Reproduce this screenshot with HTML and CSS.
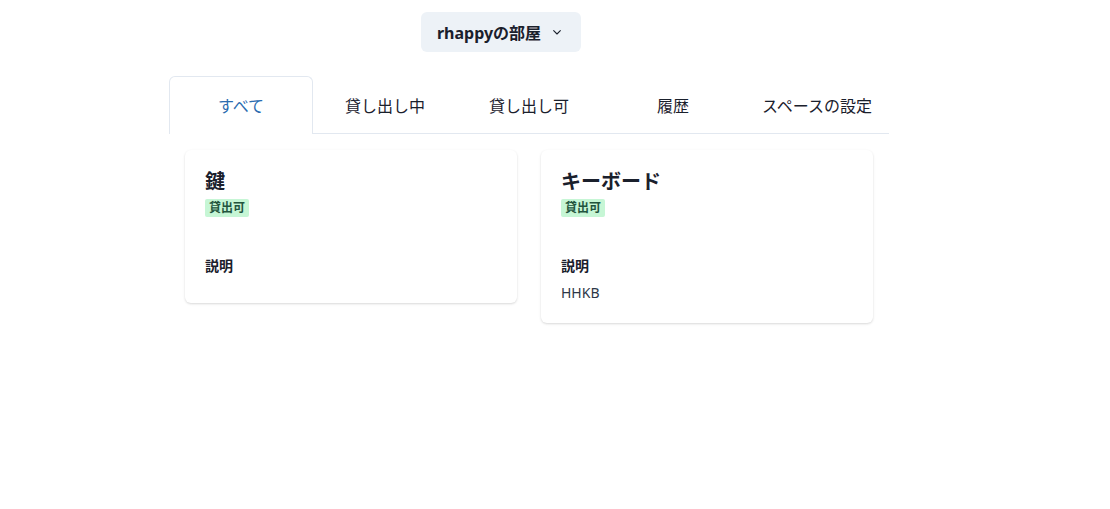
FILE: index.html
```html
<!DOCTYPE html>
<html lang="ja">
<head>
<meta charset="utf-8">
<title>rhappyの部屋</title>
<link rel="stylesheet" href="styles.css">
</head>
<body>
<div class="page">
  <div class="header">
    <button class="menu-btn" type="button">
      <span>rhappyの部屋</span>
      <svg class="chev" viewBox="0 0 24 24" width="16" height="16"><path d="M7 10l5 5 5-5" fill="none" stroke="currentColor" stroke-width="1.6" stroke-linecap="round" stroke-linejoin="round"/></svg>
    </button>
  </div>
  <div class="tabs">
    <div class="tablist">
      <div class="tab selected">すべて</div>
      <div class="tab">貸し出し中</div>
      <div class="tab">貸し出し可</div>
      <div class="tab">履歴</div>
      <div class="tab">スペースの設定</div>
    </div>
    <div class="panel">
      <div class="card">
        <div class="card-header">
          <h2 class="title">鍵</h2>
          <span class="badge">貸出可</span>
        </div>
        <div class="card-body">
          <h3 class="label">説明</h3>
          <p class="desc"></p>
        </div>
      </div>
      <div class="card">
        <div class="card-header">
          <h2 class="title">キーボード</h2>
          <span class="badge">貸出可</span>
        </div>
        <div class="card-body">
          <h3 class="label">説明</h3>
          <p class="desc">HHKB</p>
        </div>
      </div>
    </div>
  </div>
</div>
</body>
</html>
```

FILE: styles.css
```css
* { box-sizing: border-box; }
html, body {
  margin: 0;
  padding: 0;
  background: #ffffff;
  font-family: "Noto Sans", "Noto Sans CJK JP", sans-serif;
  color: #1A202C;
}
.page {
  width: 720px;
  margin-left: 169px;
  padding-top: 12px;
}
.header {
  display: flex;
  padding-left: 252px;
}
.menu-btn {
  display: flex;
  align-items: center;
  gap: 8px;
  height: 40px;
  width: 160px;
  padding: 0 12px;
  border: none;
  border-radius: 6px;
  background: #EDF2F7;
  font-family: inherit;
  font-size: 16px;
  font-weight: 700;
  color: #1A202C;
  justify-content: center;
  white-space: nowrap;
}
.chev { color: #1A202C; flex: none; }
.tabs { margin-top: 24px; }
.tablist {
  display: flex;
  border-bottom: 1px solid #E2E8F0;
}
.tab {
  flex: 1;
  text-align: center;
  font-size: 16px;
  line-height: 24px;
  padding: 17px 4px 15px;
  border: 1px solid transparent;
  border-bottom: none;
  border-radius: 6px 6px 0 0;
  margin-bottom: -1px;
  color: #1A202C;
  white-space: nowrap;
}
.tab.selected {
  color: #2B6CB0;
  border-color: #E2E8F0;
  background: #fff;
  padding-bottom: 16px;
}
.panel {
  padding: 16px;
  display: grid;
  grid-template-columns: 1fr 1fr;
  gap: 24px;
  align-items: start;
}
.card {
  background: #fff;
  border-radius: 6px;
  box-shadow: 0 1px 3px 0 rgba(0,0,0,0.1), 0 1px 2px 0 rgba(0,0,0,0.06);
}
.card-header { padding: 20px 20px 20px; }
.title {
  margin: 0;
  font-size: 20px;
  line-height: 24px;
  font-weight: 700;
}
.badge {
  display: inline-block;
  margin-top: 5px;
  padding: 0 4px;
  font-size: 12px;
  line-height: 18px;
  font-weight: 700;
  background: #C6F6D5;
  color: #22543D;
  border-radius: 2px;
}
.card-body { padding: 0 20px 20px; margin-top: 20px; }
.label {
  margin: 0;
  font-size: 14px;
  line-height: 17px;
  font-weight: 700;
}
.desc {
  margin: 0;
  padding-top: 9px;
  font-size: 14px;
  line-height: 20px;
  color: #2D3748;
}
```
